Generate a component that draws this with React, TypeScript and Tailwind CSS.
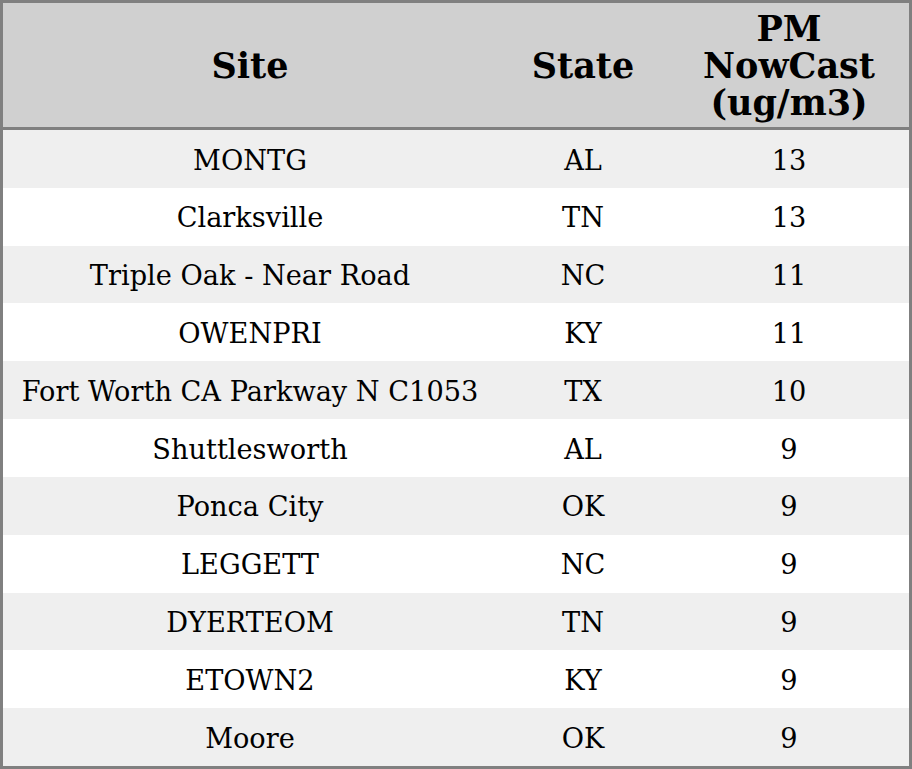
import React from "react";

const rows: [string, string, string][] = [
  ["MONTG", "AL", "13"],
  ["Clarksville", "TN", "13"],
  ["Triple Oak - Near Road", "NC", "11"],
  ["OWENPRI", "KY", "11"],
  ["Fort Worth CA Parkway N C1053", "TX", "10"],
  ["Shuttlesworth", "AL", "9"],
  ["Ponca City", "OK", "9"],
  ["LEGGETT", "NC", "9"],
  ["DYERTEOM", "TN", "9"],
  ["ETOWN2", "KY", "9"],
  ["Moore", "OK", "9"],
];

export default function App() {
  return (
    <div
      className="w-[912px] h-[769px] bg-white text-black"
      style={{ fontFamily: '"DejaVu Serif", serif' }}
    >
      <div className="w-full h-full border-[3px] border-[#808080] flex flex-col">
        <div className="grid grid-cols-[494px_172px_1fr] h-[127px] bg-[#d0d0d0] border-b-[3px] border-[#808080] font-bold text-[35px] leading-[37px]">
          <div className="flex items-center justify-center">Site</div>
          <div className="flex items-center justify-center">State</div>
          <div className="flex items-center justify-center text-center">
            PM
            <br />
            NowCast
            <br />
            (ug/m3)
          </div>
        </div>
        <div className="flex-1 flex flex-col">
          {rows.map((r, i) => (
            <div
              key={i}
              className={
                "flex-1 grid grid-cols-[494px_172px_1fr] items-center pt-[4px] text-[27.2px] " +
                (i % 2 === 0 ? "bg-[#efefef]" : "bg-white")
              }
            >
              <div className="text-center">{r[0]}</div>
              <div className="text-center">{r[1]}</div>
              <div className="text-center">{r[2]}</div>
            </div>
          ))}
        </div>
      </div>
    </div>
  );
}
